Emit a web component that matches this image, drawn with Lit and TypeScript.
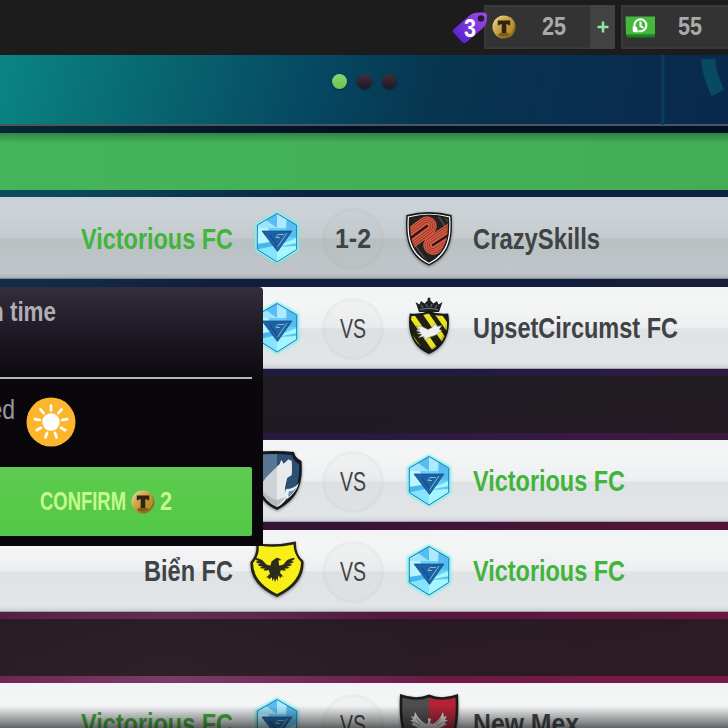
import { LitElement, html, svg, css, nothing } from 'lit'
import { customElement, property } from 'lit/decorators.js'

type CrestName = 'diamond' | 'coils' | 'stripes' | 'wolf' | 'eagle' | 'halves'

interface Team {
    name: string
    width: number
    crest: CrestName
    own?: boolean
}

interface Match {
    home: Team
    away: Team
    score?: string
}

const victorious: Team = {
    name: 'Victorious FC',
    width: 152,
    crest: 'diamond',
    own: true,
}

// null stands for a section header between match days
const ROUNDS: (Match | null)[] = [
    null,
    {
        home: victorious,
        away: { name: 'CrazySkills', width: 127, crest: 'coils' },
        score: '1-2',
    },
    {
        home: victorious,
        away: { name: 'UpsetCircumst FC', width: 205, crest: 'stripes' },
    },
    null,
    { home: { name: '', width: 0, crest: 'wolf' }, away: victorious },
    { home: { name: 'Biển FC', width: 89, crest: 'eagle' }, away: victorious },
    null,
    {
        home: victorious,
        away: { name: 'New Mex', width: 106, crest: 'halves' },
    },
]

@customElement('narrow-text')
export class NarrowText extends LitElement {
    @property({ type: String }) text = ''
    @property({ type: Number }) width = 100
    @property({ type: Number }) size = 29.5

    static styles = css`
        :host {
            display: block;
            flex: none;
        }

        svg {
            display: block;
            overflow: visible;
        }

        text {
            font-family: 'Liberation Sans', Arial, sans-serif;
            font-weight: inherit;
            fill: currentColor;
        }
    `

    render() {
        return html`
            <svg width=${this.width} height=${this.size}>
                <text
                    x="0"
                    y=${this.size * 0.82}
                    font-size=${this.size}
                    textLength=${this.width}
                    lengthAdjust="spacingAndGlyphs"
                >${this.text}</text>
            </svg>
        `
    }
}

@customElement('token-coin')
export class TokenCoin extends LitElement {
    static styles = css`
        :host {
            display: block;
            flex: none;
            width: 24px;
            height: 24px;
        }

        svg {
            display: block;
        }
    `

    render() {
        return html`
            <svg width="24" height="24" viewBox="0 0 24 24">
                <defs>
                    <linearGradient id="gold" x1="0" y1="0" x2="1" y2="1">
                        <stop offset="0" stop-color="#f3e9b4" />
                        <stop offset=".4" stop-color="#cda944" />
                        <stop offset=".8" stop-color="#8c6a1c" />
                        <stop offset="1" stop-color="#d7bd66" />
                    </linearGradient>
                    <linearGradient id="face" x1="0" y1="0" x2="1" y2="1">
                        <stop offset="0" stop-color="#dcc98a" />
                        <stop offset=".5" stop-color="#c39d3c" />
                        <stop offset="1" stop-color="#a88228" />
                    </linearGradient>
                </defs>
                <circle cx="12" cy="12" r="11.500" fill="url(#gold)" />
                <circle cx="12" cy="11.700" r="9.700" fill="url(#face)" />
                <path d="M6 20q6 4 12-1l-2-1H8z" fill="#7c5b14" />
                <path
                    d="M5.800 5.600h12.400v4.700h-1.500l-1-1.100h-1.400v8.800H9.700V9.200H8.300l-1 1.100H5.800z"
                    fill="#33230e"
                />
            </svg>
        `
    }
}

@customElement('team-crest')
export class TeamCrest extends LitElement {
    @property({ type: String }) name: CrestName = 'diamond'

    static styles = css`
        :host {
            display: block;
            flex: none;
            width: 60px;
            height: 60px;
        }

        svg {
            display: block;
            overflow: visible;
        }

        .glow {
            filter: drop-shadow(0 0 1.5px #58f0e0);
        }

        .shade {
            filter: drop-shadow(0 1px 1.5px rgba(0, 0, 0, 0.45));
        }
    `

    private _diamond() {
        return svg`
            <path class="glow" d="M30 3 51.500 15V41.500L30 54.500 8.500 41.500V15z" fill="#8ff3f4" />
            <path d="M30 4.500 49.700 16V40.500L30 53 10.300 40.500V16z" fill="#66cff8" />
            <path d="M30 4.500V18H10.300V16z" fill="#58bdf0" />
            <path d="M30 4.500 49.700 16V19L30 19z" fill="#aeeaff" />
            <path d="M19 11 30 19H10.300V16z" fill="#9fe4fd" />
            <path d="M39.500 10 49.700 16V28H39z" fill="#56bdf0" />
            <path d="M10.300 19H21l6 15-16.700 1z" fill="#baf4ff" />
            <path d="M10.300 35 29 32v7l-18.700 1z" fill="#49b5ee" />
            <path d="M10.300 40.500 30 36v17z" fill="#86e4ff" />
            <path d="M30 37 49.700 29V40.500L30 53z" fill="#a5f6ff" />
            <path d="M30 38 49.700 34V37z" fill="#55c8f5" />
            <path d="M30 4.500 49.700 16V40.500L30 53 10.300 40.500V16z" fill="none" stroke="#2777b2" stroke-width="1" />
            <path d="M15 22H45L30.500 42.500z" fill="#1d62a6" stroke="#16508f" stroke-width=".8" />
            <path d="M40 24 30.500 38M37 25.500h-6l-2 3h4" fill="none" stroke="#8cc4cc" stroke-width=".9" />
            <path d="M30.500 37 23 26" fill="none" stroke="#134b88" stroke-width="1.200" />
        `
    }

    private _coils() {
        // concentric round-capped strokes give the two hairpin bands
        const rings: [number, string][] = [
            [19.4, '#dc5942'],
            [16.6, '#5e2b22'],
            [15.6, '#dc5942'],
            [12.2, '#5e2b22'],
            [11.2, '#dc5942'],
            [7.8, '#5e2b22'],
            [6.8, '#dc5942'],
            [2.4, '#241a18'],
        ]
        const bands = ['M3 35.500 28 17', 'M58 20.500 34 36']
        return svg`
            <defs>
                <clipPath id="coils">
                    <path d="M10.600 9Q30 3.500 49.400 9C50.500 27 48.500 43 30 53 11.500 43 9.500 27 10.600 9z" />
                </clipPath>
            </defs>
            <path class="shade" d="M7.400 6Q30 0 52.600 6C54 28 52 46.500 30 56.500 8 46.500 6 28 7.400 6z" fill="#17191a" />
            <path d="M8.800 7.400Q30 2 51.200 7.400C52.500 28 50.500 45 30 55 9.500 45 7.500 28 8.800 7.400z" fill="#fff" />
            <g clip-path="url(#coils)">
                <path d="M8 3h44v52H8z" fill="#242322" />
                <path d="M37 3 50 24M43 3l10 16M10 36 25 56M16 36l14 20" stroke="#4b4644" stroke-width="2" />
                ${bands.map((d) =>
                    rings.map(
                        ([width, color]) => svg`<path
                            d=${d}
                            fill="none"
                            stroke=${color}
                            stroke-width=${width}
                            stroke-linecap="round"
                        />`
                    )
                )}
            </g>
            <path d="M10.600 9Q30 3.500 49.400 9C50.500 27 48.500 43 30 53 11.500 43 9.500 27 10.600 9z" fill="none" stroke="#1c1c1c" stroke-width="1.400" />
        `
    }

    private _stripes() {
        return svg`
            <defs>
                <clipPath id="stripes">
                    <path d="M12.500 17Q22 17 30 14.500 38 17 47.500 17C50 34 44 46 30 52 16 46 10 34 12.500 17z" />
                </clipPath>
            </defs>
            <path d="m16.500 3 4 2.500L22 2l3.500 2.500L29 1h2l3.500 3.500L38 2l1.500 3.500 4-2.500-3.500 10H20z" fill="#202326" />
            <path d="M21 10.500q9-2.500 18 0M22 6l2 3M27 5l1.500 3M33 5l-1.500 3M38 6l-2 3" fill="none" stroke="#737b80" />
            <circle cx="30" cy="0" r="1.500" fill="#202326" />
            <path class="shade" d="M10.800 14.500Q22 15.500 30 12 38 15.500 49.200 14.500C52.500 34 45 49 30 55 15 49 7.500 34 10.800 14.500z" fill="#15171a" />
            <g clip-path="url(#stripes)">
                <path d="M9 10h42v45H9z" fill="#202012" />
                <path d="m22 8 30 43M34 8l24 34M10 13l30 43M4 27l24 34" stroke="#ebe224" stroke-width="5.500" />
                <path d="M13 41Q22 53 30 51 48 41 47 17v40H12z" fill="#000" opacity=".2" />
            </g>
            <path d="m17 27 6 .5 6 3 4-2 3-4 2 3 5-1-3 4 3 1-5 4-5 2-4 1-3 3-1-4-6 1 4-3-5-1 4-1-5-2 4-1z" fill="#eee" stroke="#777" stroke-width=".5" />
        `
    }

    private _wolf() {
        return svg`
            <path class="shade" d="M7 0Q28-2 47 0q1 6 7.500 9c2 25-5 39-24.500 49C9 48 2 28 7 0z" fill="#15191e" />
            <path d="M10 3Q28 1 45 3q1 6 7 9c1 21-4 33-22 43C12 46 6 28 10 3z" fill="#2c4f74" />
            <path d="M10 3Q20 2 30 2V55C12 46 6 28 10 3z" fill="#557793" />
            <path d="m44.500 9-3-1.500-5 4.500-2-4-2 4.500-6 5.500-8 8-6 9q5 15 17.500 20 6-3 9-8-2-6-1-12l2-9 4.500-3 .5-7z" fill="#cfd2d6" />
            <path d="m44.500 9-3-1.500-5 4.500-2-4-2 4.500-2.500 2V55q6-3 9-8-2-6-1-12l2-9 4.500-3 .5-7z" fill="#e9eaec" />
            <path d="m52 31q-5 6-13 6l-2 7 3 3q9-6 12-16z" fill="#e8eff4" />
            <path d="M50 35q-4 5-8 4l-1 6q6-4 9-10z" fill="#6b8dac" />
            <path d="M12 34q6 10 18 14l9-3-9 10Q17 49 12 34z" fill="#a9acb1" opacity=".7" />
        `
    }

    private _eagle() {
        return svg`
            <path class="shade" d="M9 1Q28 4 49-.5 48 12 56.500 19 58 42 30 55 2 42 3.500 20 11 12 9 1z" fill="#242414" />
            <path d="M11.500 3.500Q29 6.500 46.500 2.500 47 13 54 20 54 40 30 52 6 40 6 21 13 13 11.500 3.500z" fill="#f8ee18" />
            <path d="M28.500 16.500q2-1.500 3.500 0l2.500 1.500-3 .5.500 5q4.500 0 6-3 3-4.500 10-4.500-1 2.500-4 3l3 .7q-2 2-5 2l3 1q-2 2-5 1.500l2.500 1.500q-3 1.500-5 .5l1.500 2q-3 1-5-.5l-1 3 3.500 4-2-.5-1 2-2-3-1 6-1-3-1.500 4-1-4-2 3v-4l-3 2-1-2-2 .5 4-4-1.500-4q-2 1.500-5 .5l1.500-2q-2 1-5-.5l2.500-1.500q-3 .5-5-1.500l3-1q-3 0-5-2l3-.7q-3-.5-4-3 7 0 10 4.500 2 3 6 3l1-4z" fill="#2c2b1c" />
        `
    }

    private _halves() {
        return svg`
            <path class="shade" d="M1-1Q17 5 30-.5 43 5 59-1 61 34 52 45 45 54 30 60 15 54 8 45-1 34 1-1z" fill="#191a1c" />
            <path d="M3.500 2.500Q18 7 30 2.500V57Q15 51 10 44 2 33 3.500 2.500z" fill="#4d4d4f" />
            <path d="M56.500 2.500Q42 7 30 2.500V57Q45 51 50 44 58 33 56.500 2.500z" fill="#b32235" />
            <path d="m29 23 3 1-1 4 3 1Q41 25 44 17l1 5 3-1-2 4h3l-4 3 3 1-7 4-5 1 3 13H22l3-13-6-1-7-4 3-1-4-3h3l-2-4 3 1 1-5q4 8 11 12l2-1z" fill="#eceaea" />
            <path d="M17 23l5 6M15 27l6 4M42 23l-5 6M44 27l-6 4" stroke="#888" stroke-width=".8" />
        `
    }

    render() {
        const art = {
            diamond: () => this._diamond(),
            coils: () => this._coils(),
            stripes: () => this._stripes(),
            wolf: () => this._wolf(),
            eagle: () => this._eagle(),
            halves: () => this._halves(),
        }
        return html`
            <svg width="60" height="60" viewBox="0 0 60 60">
                ${art[this.name]()}
            </svg>
        `
    }
}

@customElement('match-row')
export class MatchRow extends LitElement {
    @property({ attribute: false }) match!: Match

    static styles = css`
        :host {
            display: grid;
            grid-template-columns: 233px 14px 60px 15px 62px 15px 60px 14px 1fr;
            align-items: center;
            height: 82.2px;
            box-sizing: border-box;
            padding-top: 3px;
            border-bottom: 1px solid #a5a6ad;
            background: linear-gradient(
                #f2f3f4 0,
                #f4f6f6 20%,
                #eceef0 50%,
                #e0e3e6 52%,
                #e2e5e7 94%,
                #cfd1d5 100%
            );
            color: #404345;
            font-weight: bold;
        }

        :host([played]) {
            border-color: #7e8b94;
            background: linear-gradient(
                #c8d0d7 0,
                #ccd3d7 20%,
                #c4cacd 50%,
                #bac1c3 52%,
                #bfc5c8 94%,
                #a9b0b5 100%
            );
        }

        .home {
            grid-column: 1;
            justify-self: end;
        }

        .home-crest {
            grid-column: 3;
        }

        .score {
            grid-column: 5;
            display: flex;
            align-items: center;
            justify-content: center;
            width: 62px;
            height: 62px;
            box-sizing: border-box;
            border: 3px solid rgba(120, 125, 130, 0.04);
            border-radius: 50%;
            background: rgba(130, 135, 140, 0.035);
        }

        .versus {
            font-weight: normal;
        }

        .away-crest {
            grid-column: 7;
        }

        .away {
            grid-column: 9;
        }

        .own {
            color: #41b43a;
        }
    `

    render() {
        const { home, away, score } = this.match
        return html`
            ${home.name
                ? html`<narrow-text
                      class="home ${home.own ? 'own' : ''}"
                      text=${home.name}
                      width=${home.width}
                  ></narrow-text>`
                : nothing}
            <team-crest class="home-crest" name=${home.crest}></team-crest>
            <div class="score">
                ${score
                    ? html`<narrow-text
                          text=${score}
                          width="36"
                          size="28"
                      ></narrow-text>`
                    : html`<narrow-text
                          class="versus"
                          text="VS"
                          width="26"
                          size="28"
                      ></narrow-text>`}
            </div>
            <team-crest class="away-crest" name=${away.crest}></team-crest>
            <narrow-text
                class="away ${away.own ? 'own' : ''}"
                text=${away.name}
                width=${away.width}
            ></narrow-text>
        `
    }
}

@customElement('top-bar')
export class TopBar extends LitElement {
    static styles = css`
        :host {
            display: flex;
            justify-content: flex-end;
            gap: 6px;
            height: 54.5px;
            box-sizing: border-box;
            padding-top: 5px;
            background: #1c1c1c;
            color: #aaa;
            font-weight: bold;
        }

        .wallet {
            position: relative;
            display: flex;
            align-items: center;
            height: 44px;
            box-sizing: border-box;
            border: 2px solid #393939;
            background: #333;
        }

        .tokens {
            width: 131px;
            padding-left: 6px;
        }

        .tokens .amount {
            margin-left: 26px;
        }

        .cash {
            width: 107px;
            padding-left: 2px;
            border-right: 0;
        }

        .cash .amount {
            margin-left: 22px;
        }

        .plus {
            display: flex;
            align-items: center;
            justify-content: center;
            width: 25px;
            height: 44px;
            margin: -2px -2px -2px auto;
            background: #424242;
        }

        .tag {
            position: absolute;
            left: -35px;
            top: 3px;
        }

        .tag-count {
            position: absolute;
            left: -22px;
            top: 9px;
            color: #fff;
        }
    `

    render() {
        return html`
            <div class="wallet tokens">
                <svg class="tag" width="38" height="36" viewBox="0 0 38 36">
                    <defs>
                        <linearGradient id="tag" x1="0" y1="1" x2="1" y2="0">
                            <stop offset="0" stop-color="#4c1ccf" />
                            <stop offset="1" stop-color="#a34ce8" />
                        </linearGradient>
                    </defs>
                    <path
                        d="M2 20 19 5q3-2.500 8-2.500h5q3.500 0 4 3l-.500 6q-.500 4-4 7L15 32.500q-2 1.500-4-.500L2 22q-1-1 0-2z"
                        fill="url(#tag)"
                    />
                    <circle cx="30" cy="8.500" r="3.300" fill="#261a38" />
                </svg>
                <narrow-text
                    class="tag-count"
                    text="3"
                    width="12"
                    size="25"
                ></narrow-text>
                <token-coin></token-coin>
                <narrow-text
                    class="amount"
                    text="25"
                    width="24"
                    size="26"
                ></narrow-text>
                <div class="plus">
                    <svg width="12" height="12" viewBox="0 0 12 12">
                        <path
                            d="M6 .5v11M.5 6h11"
                            stroke="#8fe79d"
                            stroke-width="2.500"
                        />
                    </svg>
                </div>
            </div>
            <div class="wallet cash">
                <svg width="31" height="23" viewBox="0 0 31 23">
                    <path d="M1 1h28.500l.5 20.500H2z" fill="#17811f" />
                    <path d="M.5.500h29.500V18H1z" fill="#44b93c" />
                    <path d="M1 18h29v1.500H1z" fill="#239226" />
                    <path
                        d="M10 12a6 6 0 1 1 3.500 3M15.500 5.500v4.500l3 2"
                        fill="none"
                        stroke="#fff"
                        stroke-width="2"
                    />
                    <path d="m7.500 10.500 4.500.500 1 5.500-5-.500z" fill="#fff" />
                </svg>
                <narrow-text
                    class="amount"
                    text="55"
                    width="24"
                    size="26"
                ></narrow-text>
            </div>
        `
    }
}

@customElement('confirm-popup')
export class ConfirmPopup extends LitElement {
    static styles = css`
        :host {
            display: block;
            box-sizing: border-box;
            width: 263px;
            height: 259px;
            padding: 11px 11px 11px 0;
            overflow: hidden;
            border-radius: 0 4px 0 0;
            background: linear-gradient(#342d3d 0, #1b1721 20%, #09070c 38%);
            color: #b0adb4;
        }

        .title {
            display: flex;
            height: 79px;
            margin-left: -10px;
            border-bottom: 2px solid #b7b6ba;
            font-weight: bold;
        }

        .status {
            display: flex;
            height: 88px;
            align-items: flex-start;
            margin-left: -17px;
        }

        .status narrow-text {
            margin-top: 17px;
            color: #99969c;
        }

        .sun {
            margin: 18px 0 0 11px;
        }

        .confirm {
            display: flex;
            align-items: center;
            height: 69px;
            box-sizing: border-box;
            padding-left: 40px;
            gap: 5px;
            border-radius: 0 2px 2px 0;
            background: linear-gradient(#5dcb50, #53c846);
            color: #c5fb8d;
            font-weight: bold;
        }
    `

    render() {
        const rays = Array.from({ length: 9 }, (_, i) => i * 40)
        return html`
            <div class="title">
                <narrow-text text="n time" width="66" size="28"></narrow-text>
            </div>
            <div class="status">
                <narrow-text text="ted" width="32" size="28"></narrow-text>
                <svg class="sun" width="50" height="50" viewBox="0 0 50 50">
                    <circle cx="25" cy="25" r="24.500" fill="#fbb62e" />
                    <circle cx="25" cy="25" r="8.700" fill="#fff" />
                    ${rays.map(
                        (angle) => svg`<path
                            d="M25 8.500v5"
                            transform="rotate(${angle} 25 25)"
                            stroke="#fff"
                            stroke-width="2.600"
                            stroke-linecap="round"
                        />`
                    )}
                </svg>
            </div>
            <div class="confirm">
                <narrow-text text="CONFIRM" width="86" size="25"></narrow-text>
                <token-coin></token-coin>
                <narrow-text text="2" width="12" size="25"></narrow-text>
            </div>
        `
    }
}

@customElement('app-root')
export class AppRoot extends LitElement {
    static styles = css`
        :host {
            display: block;
            position: relative;
            width: 728px;
            height: 728px;
            overflow: hidden;
            background:
                radial-gradient(
                    ellipse 330px 200px at 0 130px,
                    rgba(10, 110, 120, 0.8),
                    transparent
                ),
                radial-gradient(
                    ellipse 260px 120px at 170px 670px,
                    rgba(140, 90, 130, 0.55),
                    transparent
                ),
                radial-gradient(
                    ellipse 420px 380px at 100% 620px,
                    rgba(150, 25, 65, 0.4),
                    transparent
                ),
                linear-gradient(
                    #04223c 125px,
                    #0a2243 194px,
                    #121d3d 283px,
                    #1c1b40 372px,
                    #271a40 436px,
                    #341434 525px,
                    #4d163e 615px,
                    #681a48 680px
                );
        }

        .pager {
            position: relative;
            display: flex;
            justify-content: center;
            gap: 10px;
            height: 71.5px;
            box-sizing: border-box;
            padding: 19px 0 0 0;
            border-bottom: 2px solid #4c5662;
            background: linear-gradient(
                105deg,
                #0a8584 0,
                #08666f 22%,
                #064862 43%,
                #07354f 60%,
                #082f50 78%,
                #0a294c 100%
            );
        }

        .pager svg {
            position: absolute;
            right: 0;
            top: 0;
        }

        .dot {
            width: 15px;
            height: 15px;
            border-radius: 50%;
            background: linear-gradient(#40303f, #1e1721);
            box-shadow: 0 1px 2px rgba(0, 0, 0, 0.4);
        }

        .dot.active {
            background: linear-gradient(#86d574, #6bc451);
        }

        .rounds {
            display: flex;
            flex-direction: column;
            gap: 7.2px;
            padding-top: 7px;
            background: linear-gradient(
                rgba(0, 5, 20, 0.6) 0,
                rgba(0, 5, 20, 0.6) 7px,
                transparent 7px
            );
        }

        .day {
            height: 57px;
            flex: none;
            background: rgba(32, 28, 31, 0.85);
        }

        .day.current {
            background:
                linear-gradient(rgba(0, 30, 20, 0.3), transparent 10px),
                linear-gradient(90deg, #44b45a, #43ad56);
        }

        match-row {
            flex: none;
        }

        confirm-popup {
            position: absolute;
            left: 0;
            top: 287px;
        }

        .fade {
            position: absolute;
            left: 0;
            right: 0;
            bottom: 0;
            height: 22px;
            background: linear-gradient(transparent, rgba(20, 20, 20, 0.62));
        }
    `

    render() {
        return html`
            <top-bar></top-bar>
            <div class="pager">
                <svg width="90" height="70" viewBox="0 0 90 70">
                    <path d="M25 0v70" stroke="#0b3d5c" stroke-width="3" />
                    <path
                        d="M70 4q1 16 10 34"
                        fill="none"
                        stroke="#0a4a60"
                        stroke-width="14"
                    />
                </svg>
                <div class="dot active"></div>
                <div class="dot"></div>
                <div class="dot"></div>
            </div>
            <div class="rounds">
                ${ROUNDS.map((match, i) =>
                    match
                        ? html`<match-row
                              .match=${match}
                              ?played=${!!match.score}
                          ></match-row>`
                        : html`<div class="day ${i === 0 ? 'current' : ''}"></div>`
                )}
            </div>
            <confirm-popup></confirm-popup>
            <div class="fade"></div>
        `
    }
}
